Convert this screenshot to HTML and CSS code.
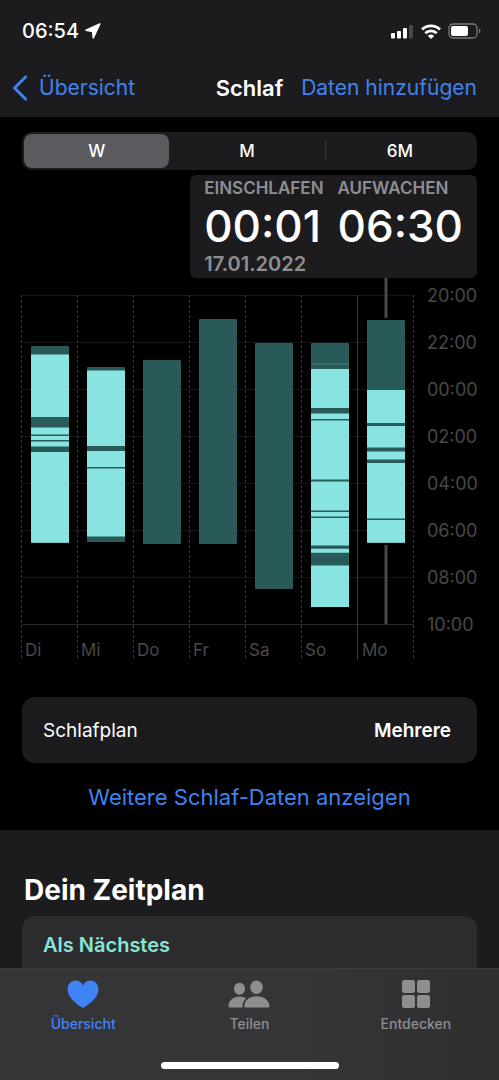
FILE: index.html
```html
<!DOCTYPE html>
<html lang="de">
<head>
  <meta charset="UTF-8">
  <meta name="viewport" content="width=device-width, initial-scale=1.0">
  <title>Schlaf</title>
  <link rel="stylesheet" href="styles.css">
</head>
<body>
  <header class="header">
    <div class="status-bar">
      <div class="status-time">
        <span>06:54</span>
        <svg width="16" height="16" viewBox="0 0 16 16" fill="#fff" stroke="#fff" stroke-width="1.500" stroke-linejoin="round"><path d="M14.800 1 1 7.300l6.500 1.200.8 6.500z"/></svg>
      </div>
      <div class="status-icons">
        <svg width="23" height="15" viewBox="0 0 23 15" fill="#fff">
          <rect x="0" y="9" width="4" height="5.500" rx="1"/>
          <rect x="6" y="7" width="4" height="7.500" rx="1"/>
          <rect x="12" y="4" width="4" height="10.500" rx="1"/>
          <rect x="18" y="1" width="4" height="13.500" rx="1" fill="#48484a"/>
        </svg>
        <svg width="20" height="15" viewBox="0 0 20 15" fill="none" stroke="#fff" stroke-width="2.800">
          <path d="M1 5.500a12.800 12.800 0 0 1 18 0"/>
          <path d="M4.300 9.300a8 8 0 0 1 11.400 0"/>
          <path d="M10 15 6.900 11.900a4.400 4.400 0 0 1 6.200 0z" fill="#fff" stroke="none"/>
        </svg>
        <svg width="33" height="16" viewBox="0 0 33 16">
          <rect x="1" y="1" width="28" height="14" rx="4" fill="none" stroke="#78787a" stroke-width="1.300"/>
          <rect x="3" y="3" width="17" height="10" rx="2" fill="#fff"/>
          <path d="M31 5.500c2 1 2 4 0 5z" fill="#78787a"/>
        </svg>
      </div>
    </div>
    <nav class="nav">
      <a class="nav-back" href="#">
        <svg width="16" height="26" viewBox="0 0 16 26" fill="none" stroke="#3f83f0" stroke-width="3" stroke-linecap="round" stroke-linejoin="round"><path d="M13.500 2 2.500 13l11 11"/></svg>
        Übersicht
      </a>
      <h1 class="nav-title">Schlaf</h1>
      <a class="nav-add" href="#">Daten hinzufügen</a>
    </nav>
  </header>

  <main class="main">
    <div class="segments">
      <input type="radio" name="range" id="range-w" checked>
      <label for="range-w">W</label>
      <input type="radio" name="range" id="range-m">
      <label for="range-m">M</label>
      <input type="radio" name="range" id="range-6m">
      <label for="range-6m">6M</label>
    </div>

    <div class="details">
      <div class="detail">
        <span class="detail-label">EINSCHLAFEN</span>
        <span class="detail-value">00:01</span>
        <span class="detail-date">17.01.2022</span>
      </div>
      <div class="detail">
        <span class="detail-label">AUFWACHEN</span>
        <span class="detail-value">06:30</span>
      </div>
    </div>

    <svg class="chart" viewBox="0 0 455 382">
      <!-- hour lines, 47 units for every two hours -->
      <path class="grid" d="M0 17.500h392M0 64.500h392M0 111.500h392M0 158.500h392M0 205.500h392M0 252.500h392M0 299.500h392"/>
      <path class="grid-base" d="M0 346.500h392"/>
      <path class="grid-day" d="M-.5 17v365M55.500 17v365M111.500 17v365M167.500 17v365M223.500 17v365M279.500 17v365M391.500 17v365"/>
      <path class="grid-week" d="M335.500 17v365"/>
      <path class="selection" d="M364 0v40M364 267v79"/>

      <g class="in-bed">
        <rect x="9" y="68" width="38" height="197" rx="1"/>
        <rect x="65" y="89" width="38" height="175" rx="1"/>
        <rect x="121" y="82" width="38" height="184" rx="1"/>
        <rect x="177" y="41" width="38" height="225" rx="1"/>
        <rect x="233" y="65" width="38" height="246" rx="1"/>
        <rect x="289" y="65" width="38" height="264" rx="1"/>
        <rect x="345" y="42" width="38" height="223" rx="1"/>
      </g>

      <g class="asleep">
        <path d="M9 76.500h38v62.500h-38zM9 149.500h38v7h-38zM9 158h38v4h-38zM9 163.500h38v5h-38zM9 174h38v90.700h-38z"/>
        <path d="M65 92.500h38v75.500h-38zM65 173h38v16h-38zM65 190.500h38v68h-38z"/>
        <path d="M289 91h38v39h-38zM289 135.500h38v5.500h-38zM289 142.500h38v59h-38zM289 203.500h38v29h-38zM289 234h38v4.500h-38zM289 240h38v27.500h-38zM289 270.800h38v4h-38zM289 287.500h38v41.500h-38z"/>
        <path d="M345 112h38v33h-38zM345 148h38v21.500h-38zM345 173.500h38v8h-38zM345 185h38v55.500h-38zM345 242h38v22.700h-38z"/>
      </g>
      <path class="asleep-short" d="M289 86h38"/>

      <g class="axis hours">
        <text x="405" y="24">20:00</text>
        <text x="405" y="71">22:00</text>
        <text x="405" y="118">00:00</text>
        <text x="405" y="165">02:00</text>
        <text x="405" y="212">04:00</text>
        <text x="405" y="259">06:00</text>
        <text x="405" y="306">08:00</text>
        <text x="405" y="353">10:00</text>
      </g>
      <g class="axis">
        <text x="3" y="378">Di</text>
        <text x="59" y="378">Mi</text>
        <text x="115" y="378">Do</text>
        <text x="171" y="378">Fr</text>
        <text x="227" y="378">Sa</text>
        <text x="283" y="378">So</text>
        <text x="340" y="378">Mo</text>
      </g>
    </svg>

    <button class="plan">
      <span>Schlafplan</span>
      <strong>Mehrere</strong>
    </button>
    <a class="more" href="#">Weitere Schlaf-Daten anzeigen</a>
  </main>

  <section class="schedule">
    <h2>Dein Zeitplan</h2>
    <div class="next">Als Nächstes</div>
  </section>

  <footer class="tab-bar">
    <nav class="tabs">
      <a class="tab active" href="#">
        <svg width="32" height="28" viewBox="0 0 32 28" fill="currentColor"><path d="M16 28C9.500 24 .6 17.500.6 9.400.6 4.300 4 .6 8.400.6c3.400 0 6.100 1.900 7.600 4.800C17.500 2.500 20.200.6 23.600.6 28 .6 31.400 4.300 31.400 9.400 31.400 17.500 22.500 24 16 28z"/></svg>
        <span>Übersicht</span>
      </a>
      <a class="tab" href="#">
        <svg width="42" height="28" viewBox="0 0 42 28" fill="currentColor">
          <ellipse cx="11.500" cy="8.700" rx="5.600" ry="6"/>
          <path d="M.5 26c0-5.500 5-9.500 11-9.500 2.600 0 4.900.7 6.800 2-2.500 2-3.900 4.700-3.900 7.500 0 .6.100 1 .3 1.500H2c-1 0-1.500-.5-1.500-1.500z"/>
          <ellipse cx="28.500" cy="7.300" rx="6.300" ry="6.700"/>
          <path d="M16.300 26c0-5.500 5.700-9.700 12.500-9.700s12.700 4.200 12.700 9.700c0 1-.6 1.500-1.600 1.500h-22c-1 0-1.600-.5-1.600-1.500z"/>
        </svg>
        <span>Teilen</span>
      </a>
      <a class="tab" href="#">
        <svg width="28" height="28" viewBox="0 0 28 28" fill="currentColor">
          <rect x="0" y="0" width="13" height="13" rx="2.500"/>
          <rect x="15" y="0" width="13" height="13" rx="2.500"/>
          <rect x="0" y="15" width="13" height="13" rx="2.500"/>
          <rect x="15" y="15" width="13" height="13" rx="2.500"/>
        </svg>
        <span>Entdecken</span>
      </a>
    </nav>
    <div class="home-indicator"></div>
  </footer>
</body>
</html>
```

FILE: styles.css
```css
* {
  box-sizing: border-box;
}

body {
  font-family: Inter, "Liberation Sans", sans-serif;
  background-color: #1c1c1e;
  color: #fff;
  margin: 0;
  min-height: 100vh;
  display: flex;
  flex-direction: column;
}

a {
  color: #3f83f0;
  text-decoration: none;
}

svg {
  display: block;
  flex-shrink: 0;
}

.header {
  background-color: #1c1c1e;
}

.status-bar {
  display: flex;
  justify-content: space-between;
  align-items: center;
  height: 62px;
  padding: 0 18px 0 22px;
}

.status-time {
  display: flex;
  align-items: center;
  gap: 6px;
  font-size: 20px;
  font-weight: 500;
}

.status-icons {
  display: flex;
  align-items: center;
  gap: 7px;
}

.nav {
  display: grid;
  grid-template-columns: 1fr auto 1fr;
  align-items: center;
  gap: 8px;
  height: 55px;
  padding: 0 12px 4px;
  font-size: 21px;
  line-height: 28px;
  white-space: nowrap;
}

.nav-back {
  display: flex;
  align-items: center;
  gap: 11px;
}

.nav-title {
  margin: 0;
  font-size: 22px;
  font-weight: 600;
}

.nav-add {
  padding-right: 10px;
  text-align: right;
}

.main {
  display: flex;
  flex-direction: column;
  padding: 15px 22px 19px;
  background-color: #000;
}

.segments {
  display: grid;
  grid-template-columns: 29fr 31fr 30fr;
  padding: 2px;
  margin-bottom: 5px;
  border-radius: 10px;
  background-color: #1c1c1f;
}

.segments input {
  position: absolute;
  opacity: 0;
}

.segments label {
  border-radius: 8px;
  font-size: 17px;
  font-weight: 500;
  line-height: 34px;
  text-align: center;
  cursor: pointer;
}

.segments input:checked + label {
  background-color: #5b5a5f;
}

/* divider between two unselected segments */
.segments label:last-child {
  background: linear-gradient(#3a3a3d, #3a3a3d) left center / 1px 20px no-repeat;
}

.details {
  display: flex;
  align-self: flex-end;
  gap: 14px;
  height: 103px;
  padding: 3px 14px 0;
  border-radius: 6px;
  background-color: #1c1c1e;
}

.detail {
  display: flex;
  flex-direction: column;
}

.detail-label,
.detail-date {
  color: #8e8e93;
  font-size: 17px;
  font-weight: 600;
  line-height: 20px;
}

.detail-date {
  font-size: 20px;
}

.detail-value {
  font-size: 44px;
  font-weight: 500;
  line-height: 56px;
}

.chart {
  width: 100%;
  overflow: visible;
}

.grid,
.grid-base,
.grid-day,
.grid-week {
  fill: none;
  stroke: #151516;
}

.grid-base {
  stroke: #29292a;
}

.grid-day {
  stroke: #343436;
  stroke-dasharray: 3 2;
}

.grid-week {
  stroke: #3c3c3e;
}

.selection {
  stroke: #48484a;
  stroke-width: 3;
}

.in-bed {
  fill: #275a59;
}

.asleep {
  fill: #88e4e0;
}

.asleep-short {
  stroke: #417f7d;
}

.axis {
  fill: #48484a;
  font-size: 17px;
}

.hours {
  font-size: 18px;
}

.plan {
  display: flex;
  justify-content: space-between;
  align-items: center;
  height: 66px;
  margin-top: 37px;
  padding: 0 26px 0 21px;
  border: none;
  border-radius: 13px;
  background-color: #1c1c1e;
  color: #fff;
  font-family: inherit;
  font-size: 19px;
  cursor: pointer;
}

.plan strong {
  font-weight: 600;
}

.more {
  margin-top: 20px;
  font-size: 22px;
  line-height: 28px;
  text-align: center;
}

.schedule {
  flex: 1;
  display: flex;
  flex-direction: column;
  padding: 44px 22px 0;
}

.schedule h2 {
  margin: 0 2px 10px;
  font-size: 28px;
  line-height: 32px;
}

.next {
  flex: 1;
  padding: 17px 21px;
  border-radius: 13px 13px 0 0;
  background-color: #2c2c2e;
  color: #88e4d8;
  font-size: 20px;
  font-weight: 600;
  line-height: 24px;
}

.tab-bar {
  position: fixed;
  left: 0;
  right: 0;
  bottom: 0;
  padding: 11px 0;
  border-top: 1px solid #3c3c3e;
  background: linear-gradient(90deg, #353537, #353537 60%, #2f2f30);
}

.tabs {
  display: flex;
}

.tab {
  flex: 1;
  display: flex;
  flex-direction: column;
  align-items: center;
  gap: 8px;
  color: #8e8e91;
  font-size: 14px;
  font-weight: 500;
  line-height: 16px;
}

.tab.active {
  color: #3f83f7;
}

.home-indicator {
  width: 178px;
  height: 7px;
  margin: 30px auto 0;
  border-radius: 4px;
  background-color: #fff;
}
```
